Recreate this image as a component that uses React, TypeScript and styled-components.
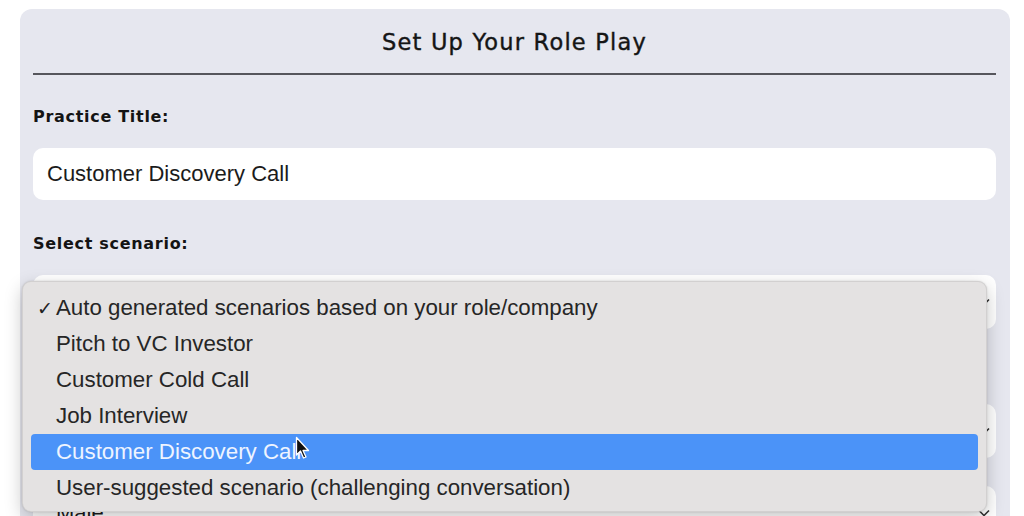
import styled, { createGlobalStyle } from "styled-components";

const GlobalStyle = createGlobalStyle`
  html, body {
    margin: 0;
    background: #ffffff;
  }
  * {
    box-sizing: border-box;
  }
`;

const Page = styled.div`
  height: 516px;
  overflow: hidden;
  padding: 9px 14px 0 20px;
`;

const Card = styled.div`
  position: relative;
  background-color: #e6e7ef;
  border-radius: 12px;
  padding: 0 14px 40px 13px;
  min-height: 560px;
`;

const Title = styled.h1`
  margin: 0;
  padding: 18px 0 16px;
  text-align: center;
  font-family: "DejaVu Sans", "Open Sans", sans-serif;
  font-weight: 400;
  font-size: 22.5px;
  letter-spacing: 1.2px;
  line-height: 30px;
  color: #151515;
  -webkit-text-stroke: 0.4px #151515;
  border-bottom: 2px solid #56565c;
`;

const Group = styled.div<{ $gap: number }>`
  display: flex;
  flex-direction: column;
  margin-top: ${(props) => props.$gap}px;
`;

const Label = styled.label`
  font-family: "DejaVu Sans", "Open Sans", sans-serif;
  font-weight: 700;
  font-size: 16px;
  letter-spacing: 0.7px;
  line-height: 20px;
  color: #141414;
  margin-bottom: 21px;
`;

const TextInput = styled.div`
  height: 52px;
  background: #ffffff;
  border-radius: 10px;
  padding: 0 14px;
  display: flex;
  align-items: center;
  font-family: "Liberation Sans", Arial, sans-serif;
  font-size: 22px;
  color: #1b1b1b;
`;

const SelectBox = styled.div`
  height: 54px;
  background: #ffffff;
  border-radius: 10px;
  padding: 0 6px 0 23px;
  display: flex;
  align-items: center;
  justify-content: space-between;
  font-family: "Liberation Sans", Arial, sans-serif;
  font-size: 22px;
  color: #1b1b1b;
`;

const Menu = styled.ul`
  position: absolute;
  left: 2px;
  top: 272px;
  width: 965px;
  margin: 0;
  padding: 8px 8px 5px;
  list-style: none;
  background: #e4e2e2;
  border-radius: 9px;
  border: 1px solid rgba(0, 0, 0, 0.08);
  box-shadow: 0 6px 18px rgba(0, 0, 0, 0.22), 0 0 2px rgba(0, 0, 0, 0.15);
`;

const Option = styled.li<{ $active?: boolean }>`
  position: relative;
  height: 36px;
  display: flex;
  align-items: center;
  padding-left: 25px;
  border-radius: 4px;
  font-family: "Liberation Sans", Arial, sans-serif;
  font-size: 22.3px;
  color: ${(props) => (props.$active ? "#eef4ff" : "#262626")};
  background: ${(props) => (props.$active ? "#4b93f8" : "transparent")};
`;

const Check = styled.span`
  position: absolute;
  left: 6px;
  font-size: 19px;
  color: #222;
`;

const Pointer = styled.svg`
  position: absolute;
  left: 264px;
  top: 2px;
`;

const Chevron = () => (
  <svg width="12" height="8" viewBox="0 0 12 8">
    <path d="M1 1.5 L6 6.5 L11 1.5" fill="none" stroke="#333" strokeWidth="1.6" />
  </svg>
);

const options = [
  "Auto generated scenarios based on your role/company",
  "Pitch to VC Investor",
  "Customer Cold Call",
  "Job Interview",
  "Customer Discovery Call",
  "User-suggested scenario (challenging conversation)",
];

function App() {
  return (
    <>
      <GlobalStyle />
      <Page>
        <Card>
          <Title>Set Up Your Role Play</Title>
          <Group $gap={32}>
            <Label>Practice Title:</Label>
            <TextInput>Customer Discovery Call</TextInput>
          </Group>
          <Group $gap={34}>
            <Label>Select scenario:</Label>
            <SelectBox>
              <span />
              <Chevron />
            </SelectBox>
          </Group>
          <Group $gap={75}>
            <SelectBox>
              <span />
              <Chevron />
            </SelectBox>
          </Group>
          <Group $gap={28}>
            <SelectBox>
              <span>Male</span>
              <Chevron />
            </SelectBox>
          </Group>
          <Menu>
            {options.map((text, i) => (
              <Option key={text} $active={i === 4}>
                {i === 0 && <Check>✓</Check>}
                {text}
                {i === 4 && (
                  <Pointer width="16" height="24" viewBox="0 0 16 24">
                    <path
                      d="M1.5 1.5 L1.5 19 L5.5 15 L8.5 22 L11 21 L8 14.5 L13.5 14.5 Z"
                      fill="#111"
                      stroke="#fff"
                      strokeWidth="1.3"
                      strokeLinejoin="round"
                    />
                  </Pointer>
                )}
              </Option>
            ))}
          </Menu>
        </Card>
      </Page>
    </>
  );
}

export default App;
